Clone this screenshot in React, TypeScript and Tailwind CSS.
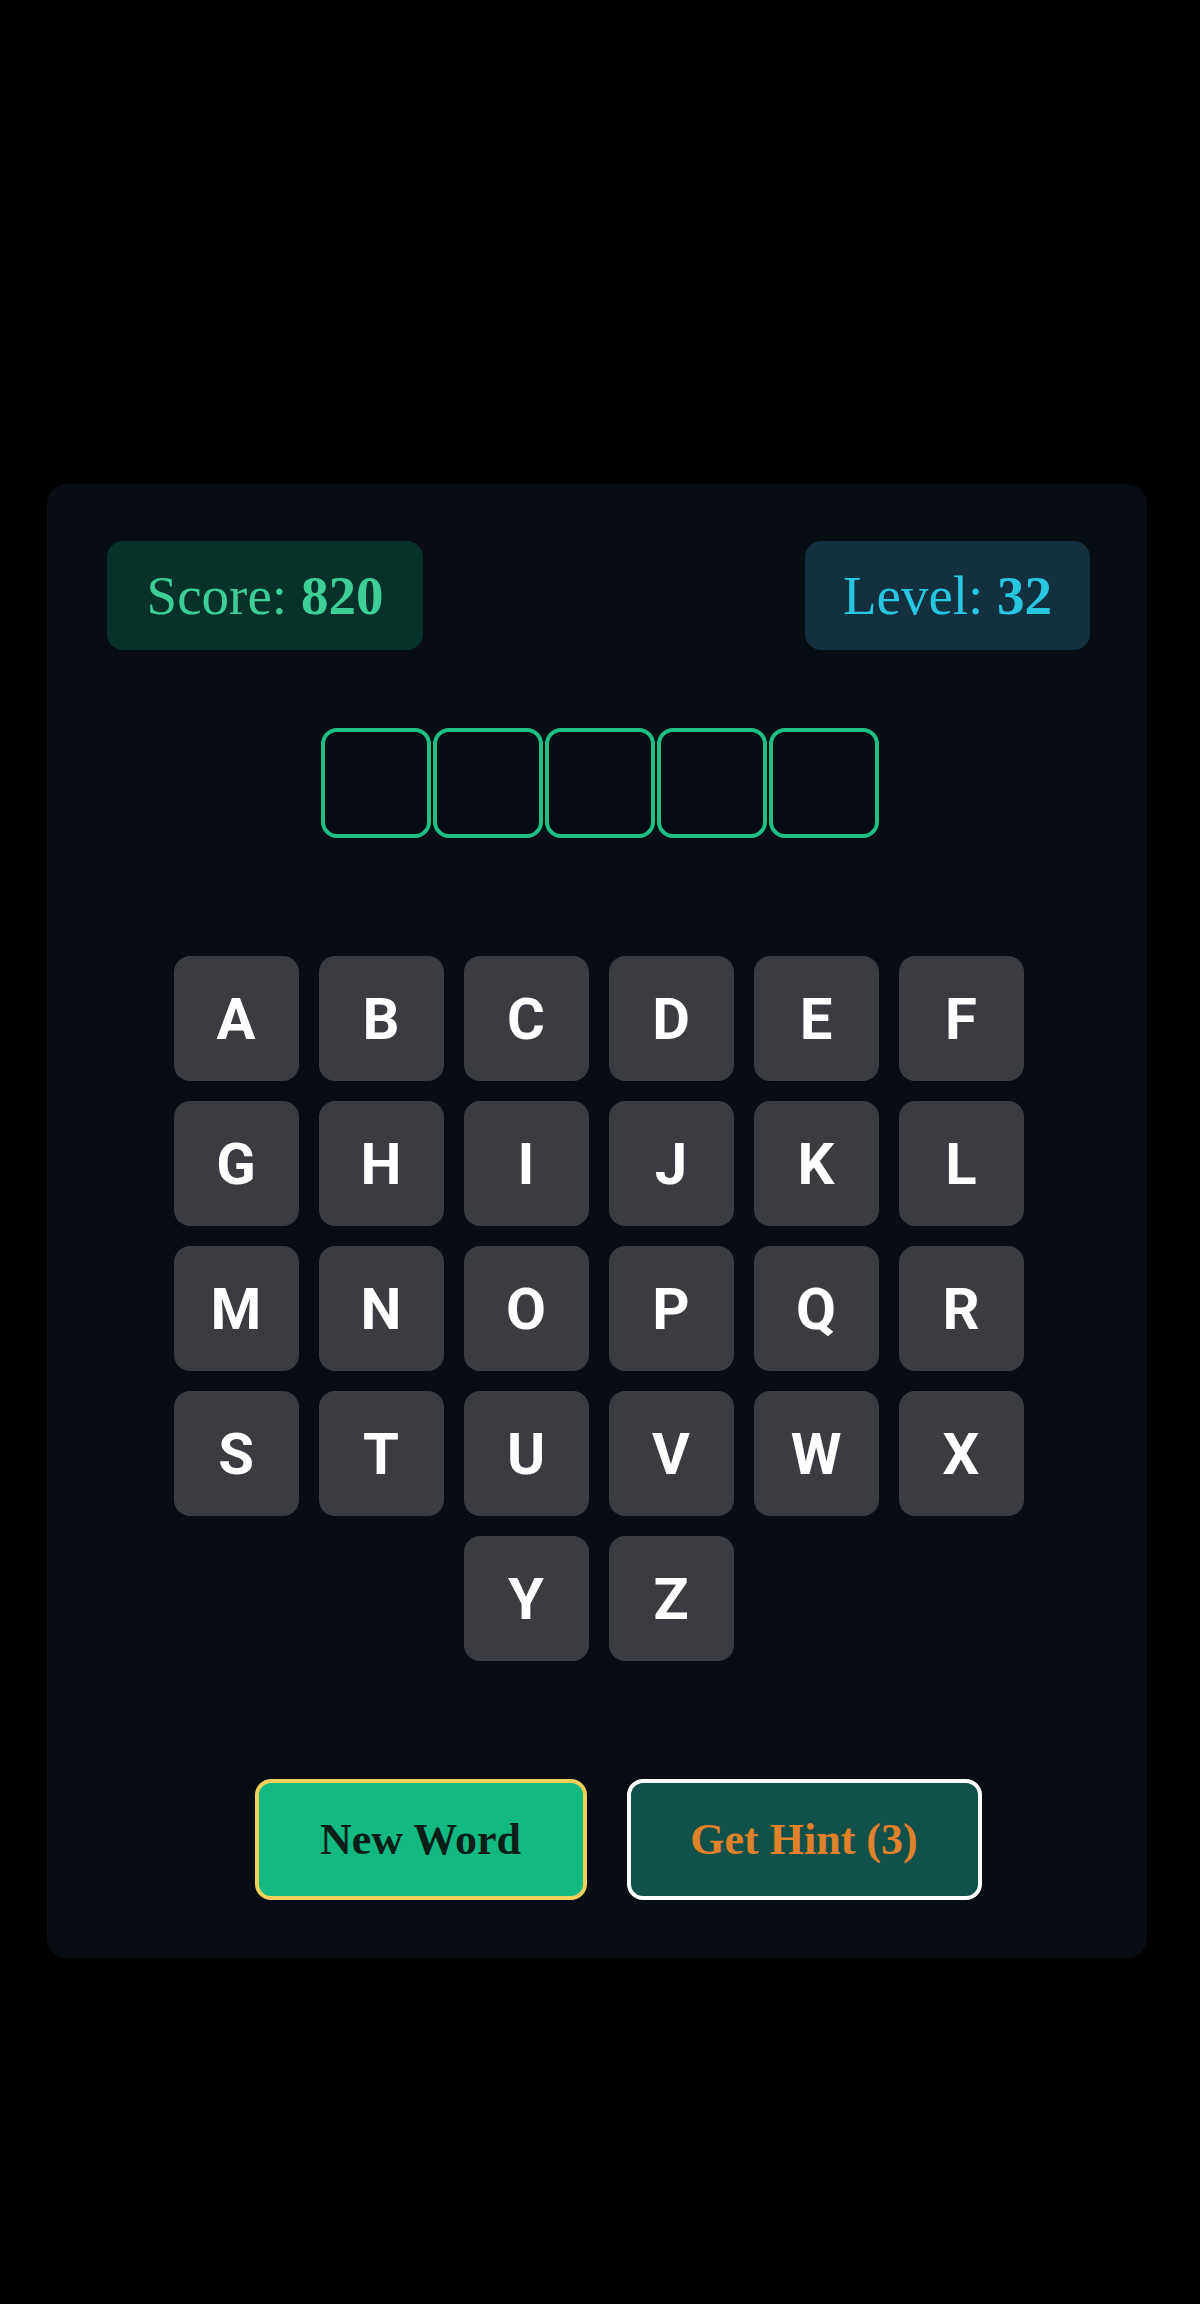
import React, { useState } from 'react';

const LETTERS = 'ABCDEFGHIJKLMNOPQRSTUVWXYZ'.split('');
const WORD_LENGTH = 5;

export default function App() {
  const [score] = useState(820);
  const [level] = useState(32);
  const [hints, setHints] = useState(3);
  const [guess, setGuess] = useState<string[]>([]);

  const pickLetter = (letter: string) => {
    if (guess.length >= WORD_LENGTH) return;
    setGuess([...guess, letter]);
  };

  return (
    <div className="min-h-[2304px] w-[1200px] bg-black pt-[484px]">
      <div className="ml-[47px] w-[1100px] rounded-[20px] bg-[#080c13] pl-[60px] pr-[57px] pt-[57px] pb-[58px]">
        {/* Stats */}
        <div className="flex items-center justify-between font-['Liberation_Serif',serif] text-[55px] leading-none">
          <div className="flex h-[109px] w-[316px] items-center justify-center rounded-[16px] bg-[#06322a] text-[#3ecf97]">
            <span>
              Score: <span className="font-bold">{score}</span>
            </span>
          </div>
          <div className="flex h-[109px] w-[285px] items-center justify-center rounded-[16px] bg-[#12303f] text-[#27c7e0]">
            <span>
              Level: <span className="font-bold">{level}</span>
            </span>
          </div>
        </div>

        {/* Word slots */}
        <div className="mt-[78px] flex justify-center gap-[2px] pl-[2px]">
          {Array.from({ length: WORD_LENGTH }).map((_, i) => (
            <div
              key={i}
              className="flex h-[110px] w-[110px] items-center justify-center rounded-[16px] border-4 border-[#1fbf86] font-['Roboto',sans-serif] text-[56px] font-bold text-white"
            >
              {guess[i] ?? ''}
            </div>
          ))}
        </div>

        {/* Keyboard */}
        <div className="mx-auto mt-[118px] flex w-[870px] flex-wrap justify-center gap-[20px]">
          {LETTERS.map((letter) => (
            <button
              key={letter}
              onClick={() => pickLetter(letter)}
              className="flex h-[125px] w-[125px] items-center justify-center rounded-[16px] bg-[#3a3c41] font-['Roboto',sans-serif] text-[58px] font-bold leading-none text-white"
            >
              {letter}
            </button>
          ))}
        </div>

        {/* Actions */}
        <div className="mt-[118px] flex justify-center gap-[40px] pl-[39px] font-['Liberation_Serif',serif] text-[44px] font-bold leading-none">
          <button
            onClick={() => setGuess([])}
            className="flex h-[121px] w-[332px] items-center justify-center rounded-[16px] border-4 border-[#f3d05c] bg-[#12b981] text-[#0a1d16]"
          >
            New Word
          </button>
          <button
            onClick={() => setHints(Math.max(0, hints - 1))}
            className="flex h-[121px] w-[355px] items-center justify-center rounded-[16px] border-4 border-white bg-[#12504a] text-[#e0822a]"
          >
            Get Hint ({hints})
          </button>
        </div>
      </div>
    </div>
  );
}
